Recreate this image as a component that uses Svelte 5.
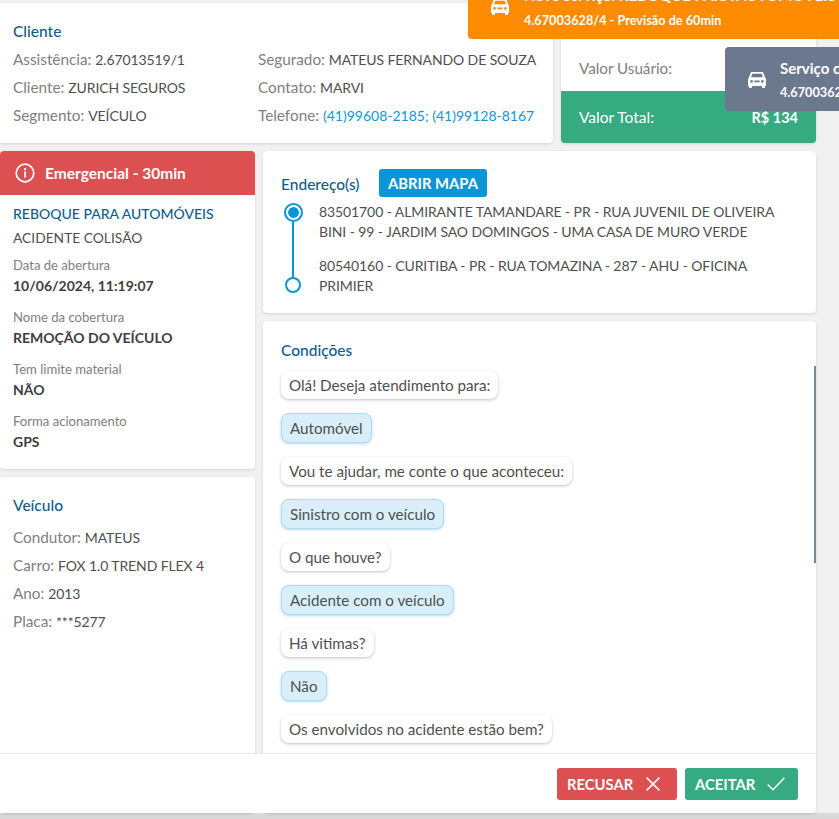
<script>
  const clientLeft = [
    ['Assistência:', '2.67013519/1'],
    ['Cliente:', 'ZURICH SEGUROS'],
    ['Segmento:', 'VEÍCULO']
  ];
  const details = [
    ['Data de abertura', '10/06/2024, 11:19:07'],
    ['Nome da cobertura', 'REMOÇÃO DO VEÍCULO'],
    ['Tem limite material', 'NÃO'],
    ['Forma acionamento', 'GPS']
  ];
  const vehicle = [
    ['Condutor:', 'MATEUS'],
    ['Carro:', 'FOX 1.0 TREND FLEX 4'],
    ['Ano:', '2013'],
    ['Placa:', '***5277']
  ];
  const chat = [
    ['Olá! Deseja atendimento para:', false],
    ['Automóvel', true],
    ['Vou te ajudar, me conte o que aconteceu:', false],
    ['Sinistro com o veículo', true],
    ['O que houve?', false],
    ['Acidente com o veículo', true],
    ['Há vitimas?', false],
    ['Não', true],
    ['Os envolvidos no acidente estão bem?', false]
  ];
</script>

{#snippet car()}
  <svg class="car" viewBox="0 0 20 18" width="18" height="17" preserveAspectRatio="none" aria-hidden="true">
    <path fill="currentColor" fill-rule="evenodd" d="M4.600 1h10.800c.9 0 1.600.5 1.900 1.400L19 7c.6.4 1 1 1 1.800V15c0 .6-.4 1-1 1v1c0 .6-.4 1-1 1h-1.500c-.6 0-1-.4-1-1v-1h-11v1c0 .6-.4 1-1 1H2c-.6 0-1-.4-1-1v-1c-.6 0-1-.4-1-1V8.800C0 8 .4 7.400 1 7l1.700-4.600C3 1.500 3.700 1 4.600 1zM4.800 3 3.400 6.700h13.200L15.200 3zM4 9.500a1.500 1.500 0 1 0 0 3 1.500 1.500 0 0 0 0-3zm12 0a1.500 1.500 0 1 0 0 3 1.500 1.500 0 0 0 0-3zM7 10v2h6v-2z"/>
  </svg>
{/snippet}

<div class="page">
  <div class="top">
    <section class="card client">
      <h3>Cliente</h3>
      <div class="client-grid">
        <div class="col">
          {#each clientLeft as [k, v]}
            <p><span class="k">{k}</span> <span class="v">{v}</span></p>
          {/each}
        </div>
        <div class="col">
          <p><span class="k">Segurado:</span> <span class="v">MATEUS FERNANDO DE SOUZA</span></p>
          <p><span class="k">Contato:</span> <span class="v">MARVI</span></p>
          <p><span class="k">Telefone:</span> <span class="v link">(41)99608-2185; (41)99128-8167</span></p>
        </div>
      </div>
    </section>
    <section class="card values">
      <div class="value-user">Valor Usuário:</div>
      <div class="value-total"><span>Valor Total:</span><b>R$ 134</b></div>
    </section>
  </div>

  <div class="main">
    <aside class="side">
      <section class="card service">
        <div class="alert">
          <svg viewBox="0 0 20 20" width="20" height="20" aria-hidden="true">
            <circle cx="10" cy="10" r="8.800" fill="none" stroke="currentColor" stroke-width="1.700"/>
            <rect x="9.100" y="8.500" width="1.800" height="6" fill="currentColor"/>
            <rect x="9.100" y="5.200" width="1.800" height="2" fill="currentColor"/>
          </svg>
          <span>Emergencial - 30min</span>
        </div>
        <div class="service-body">
          <h4>REBOQUE PARA AUTOMÓVEIS</h4>
          <p class="sub">ACIDENTE COLISÃO</p>
          {#each details as [k, v]}
            <div class="detail">
              <small>{k}</small>
              <strong>{v}</strong>
            </div>
          {/each}
        </div>
      </section>
      <section class="card vehicle">
        <h3>Veículo</h3>
        {#each vehicle as [k, v]}
          <p><span class="k">{k}</span> <span class="v">{v}</span></p>
        {/each}
      </section>
    </aside>

    <div class="content">
      <section class="card address">
        <div class="addr-head">
          <h3>Endereço(s)</h3>
          <button class="map">ABRIR MAPA</button>
        </div>
        <div class="route">
          <div class="track">
            <span class="dot on"></span>
            <span class="line"></span>
            <span class="dot"></span>
          </div>
          <div class="stops">
            <p>83501700 - ALMIRANTE TAMANDARE - PR - RUA JUVENIL DE OLIVEIRA BINI - 99 - JARDIM SAO DOMINGOS - UMA CASA DE MURO VERDE</p>
            <p>80540160 - CURITIBA - PR - RUA TOMAZINA - 287 - AHU - OFICINA PRIMIER</p>
          </div>
        </div>
      </section>
      <section class="card conditions">
        <h3>Condições</h3>
        <div class="chat">
          {#each chat as [text, mine]}
            <div class="bubble" class:mine>{text}</div>
          {/each}
        </div>
        <span class="thumb"></span>
      </section>
    </div>
  </div>

  <footer class="actions">
    <button class="act red">RECUSAR
      <svg viewBox="0 0 14 14" width="14" height="14" aria-hidden="true"><path d="M.6.6l12.800 12.800M13.400.6L.6 13.400" stroke="currentColor" stroke-width="1.500" fill="none"/></svg>
    </button>
    <button class="act green">ACEITAR
      <svg viewBox="0 0 18 14" width="18" height="14" aria-hidden="true"><path d="M.6 7.500l5.400 5.300L17.400.8" stroke="currentColor" stroke-width="1.500" fill="none"/></svg>
    </button>
  </footer>

  <div class="toast orange">
    {@render car()}
    <div class="toast-text">
      <b>Novo serviço: REBOQUE PARA AUTOMÓVEIS</b>
      <span>4.67003628/4 - Previsão de 60min</span>
    </div>
  </div>
  <div class="toast slate">
    {@render car()}
    <div class="toast-text">
      <b>Serviço concluído</b>
      <span>4.67003628/4</span>
    </div>
  </div>
</div>

<style>
  :global(body) {
    margin: 0;
    background: #f1f1f1;
  }
  .page {
    position: relative;
    width: 839px;
    height: 819px;
    overflow: hidden;
    box-sizing: border-box;
    padding-top: 3px;
    background: linear-gradient(#f1f1f1 813px, #d9d9d9 813px);
    font-family: Lato, sans-serif;
    font-size: 15.200px;
    color: #4f4f4f;
  }
  p, h3, h4 {
    margin: 0;
  }
  .card {
    background: #fff;
    border-radius: 4px;
    box-shadow: 0 1px 3px rgba(0, 0, 0, 0.12);
  }
  h3 {
    font-size: 15.500px;
    font-weight: 500;
    color: #0f5e8c;
    line-height: 20px;
  }
  .k {
    font-size: 15.300px;
    color: #808080;
  }
  .v {
    font-size: 14px;
    letter-spacing: -0.1px;
  }
  .top {
    display: flex;
    gap: 8px;
    width: 816px;
    height: 140px;
  }
  .client {
    width: 553px;
    box-sizing: border-box;
    padding: 18px 10px 0 13px;
    border-radius: 0 0 4px 0;
  }
  .client-grid {
    display: grid;
    grid-template-columns: 245px 1fr;
  }
  .client p {
    height: 28px;
    line-height: 28px;
    white-space: nowrap;
  }
  .client h3 {
    margin-bottom: 4px;
  }
  .link {
    color: #0f98d8;
    letter-spacing: 0;
  }
  .values {
    flex: 1;
    display: flex;
    flex-direction: column;
    justify-content: flex-end;
    overflow: hidden;
  }
  .value-user {
    height: 48px;
    line-height: 50px;
    padding-left: 18px;
    color: #808080;
  }
  .value-total {
    height: 52px;
    display: flex;
    justify-content: space-between;
    align-items: center;
    padding: 0 18px;
    background: #36aa80;
    color: #fff;
  }
  .value-total span {
    font-size: 15.500px;
  }
  .value-total b {
    font-size: 14.500px;
    font-weight: 700;
  }
  .main {
    display: flex;
    gap: 8px;
    margin-top: 8px;
    width: 816px;
    height: 662px;
  }
  .side {
    width: 255px;
    display: flex;
    flex-direction: column;
    gap: 8px;
  }
  .service {
    height: 318px;
    flex: none;
    overflow: hidden;
  }
  .alert {
    height: 44px;
    display: flex;
    align-items: center;
    gap: 10px;
    padding-left: 15px;
    background: #dc5052;
    color: #fff;
    font-size: 15.500px;
    font-weight: 700;
  }
  .service-body {
    padding: 9px 13px;
  }
  h4 {
    font-size: 14px;
    font-weight: 500;
    color: #0f5e8c;
    line-height: 20px;
  }
  .sub {
    font-size: 13.800px;
    line-height: 28px;
    height: 26px;
  }
  .detail {
    display: flex;
    flex-direction: column;
    height: 52px;
    padding-top: 6px;
    box-sizing: border-box;
  }
  .detail small {
    font-size: 13.100px;
    line-height: 18px;
    color: #808080;
  }
  .detail strong {
    margin-top: 1px;
    font-size: 14px;
    font-weight: 700;
    line-height: 22px;
    color: #3e3e3e;
  }
  .vehicle {
    flex: 1;
    box-sizing: border-box;
    padding: 18px 13px;
  }
  .vehicle h3 {
    margin-bottom: 8px;
  }
  .vehicle p {
    height: 28px;
    line-height: 28px;
  }
  .content {
    flex: 1;
    display: flex;
    flex-direction: column;
    gap: 8px;
  }
  .address {
    height: 162px;
    flex: none;
    box-sizing: border-box;
    padding: 18px 18px 0;
  }
  .addr-head {
    display: flex;
    align-items: center;
    gap: 17px;
    height: 28px;
    margin-bottom: 2px;
  }
  .addr-head h3 {
    width: 81px;
    margin-top: 2px;
  }
  .map {
    height: 28px;
    width: 108px;
    border: 0;
    border-radius: 3px;
    background: #0a96d6;
    color: #fff;
    font: inherit;
    font-size: 14.800px;
    font-weight: 700;
    padding: 0;
  }
  .route {
    display: flex;
    gap: 16px;
    margin-top: 4px;
    margin-left: 2px;
  }
  .track {
    width: 20px;
    height: 90px;
    margin-top: 2px;
    display: flex;
    flex-direction: column;
    align-items: center;
  }
  .dot {
    width: 16px;
    height: 16px;
    flex: none;
    box-sizing: border-box;
    border-radius: 50%;
    border: 2px solid #0a96d6;
    background: #fff;
  }
  .dot.on {
    width: 19px;
    height: 19px;
    background: radial-gradient(circle, #0a96d6 0 5px, #fff 5.600px);
  }
  .line {
    flex: 1;
    width: 2px;
    background: #0a96d6;
  }
  .stops {
    width: 462px;
    padding-top: 1px;
    font-size: 14px;
    line-height: 20px;
    letter-spacing: -0.1px;
  }
  .stops p + p {
    margin-top: 14px;
  }
  .conditions {
    position: relative;
    flex: 1;
    overflow: hidden;
    box-sizing: border-box;
    padding: 19px 18px 0;
  }
  .chat {
    display: flex;
    flex-direction: column;
    align-items: flex-start;
    gap: 14px;
    margin-top: 11px;
    padding: 0 0 4px 0;
  }
  .bubble {
    height: 28px;
    line-height: 29px;
    box-sizing: border-box;
    padding: 0 8px;
    background: #fff;
    border-radius: 8px;
    white-space: nowrap;
    box-shadow: 0 1px 3px rgba(0, 0, 0, 0.25);
  }
  .bubble.mine {
    height: 30px;
    line-height: 29px;
    background: #d8eff9;
    border: 1px solid #aadcf2;
    box-shadow: 0 1px 3px rgba(20, 130, 190, 0.3);
  }
  .thumb {
    position: absolute;
    right: 0;
    top: 45px;
    width: 2px;
    height: 197px;
    background: #7b8b9b;
  }
  .actions {
    position: absolute;
    left: 0;
    top: 753px;
    width: 816px;
    height: 60px;
    box-sizing: border-box;
    display: flex;
    justify-content: flex-end;
    align-items: center;
    gap: 8px;
    padding: 0 18px 0 0;
    background: #fff;
    border-top: 1px solid #e8e8e8;
    border-radius: 0 0 4px 0;
  }
  .act {
    height: 32px;
    display: flex;
    align-items: center;
    border: 0;
    border-radius: 3px;
    color: #fff;
    font: inherit;
    font-size: 14.800px;
    font-weight: 700;
    padding: 0 10px;
  }
  .red {
    width: 120px;
    gap: 13px;
    background: #dc5052;
  }
  .green {
    width: 113px;
    gap: 12px;
    background: #36aa80;
  }
  .toast {
    position: absolute;
    display: flex;
    align-items: center;
    color: #fff;
    white-space: nowrap;
    overflow: hidden;
  }
  .toast .car {
    flex: none;
  }
  .toast-text {
    display: flex;
    flex-direction: column;
  }
  .toast-text b {
    font-size: 15px;
    line-height: 20px;
  }
  .toast-text span {
    font-size: 12.700px;
    line-height: 18px;
    font-weight: 700;
  }
  .orange {
    left: 468px;
    top: -26px;
    width: 371px;
    height: 65px;
    padding-left: 23px;
    gap: 15px;
    box-sizing: border-box;
    background: #ff8b00;
    border-radius: 0 0 0 4px;
  }
  .orange .toast-text span {
    margin-top: 6px;
  }
  .slate {
    left: 725px;
    top: 47px;
    width: 114px;
    height: 64px;
    padding-left: 23px;
    gap: 14px;
    box-sizing: border-box;
    background: #6b788d;
    border-radius: 4px 0 0 4px;
  }
  .slate .toast-text span {
    margin-top: 5px;
  }
</style>
